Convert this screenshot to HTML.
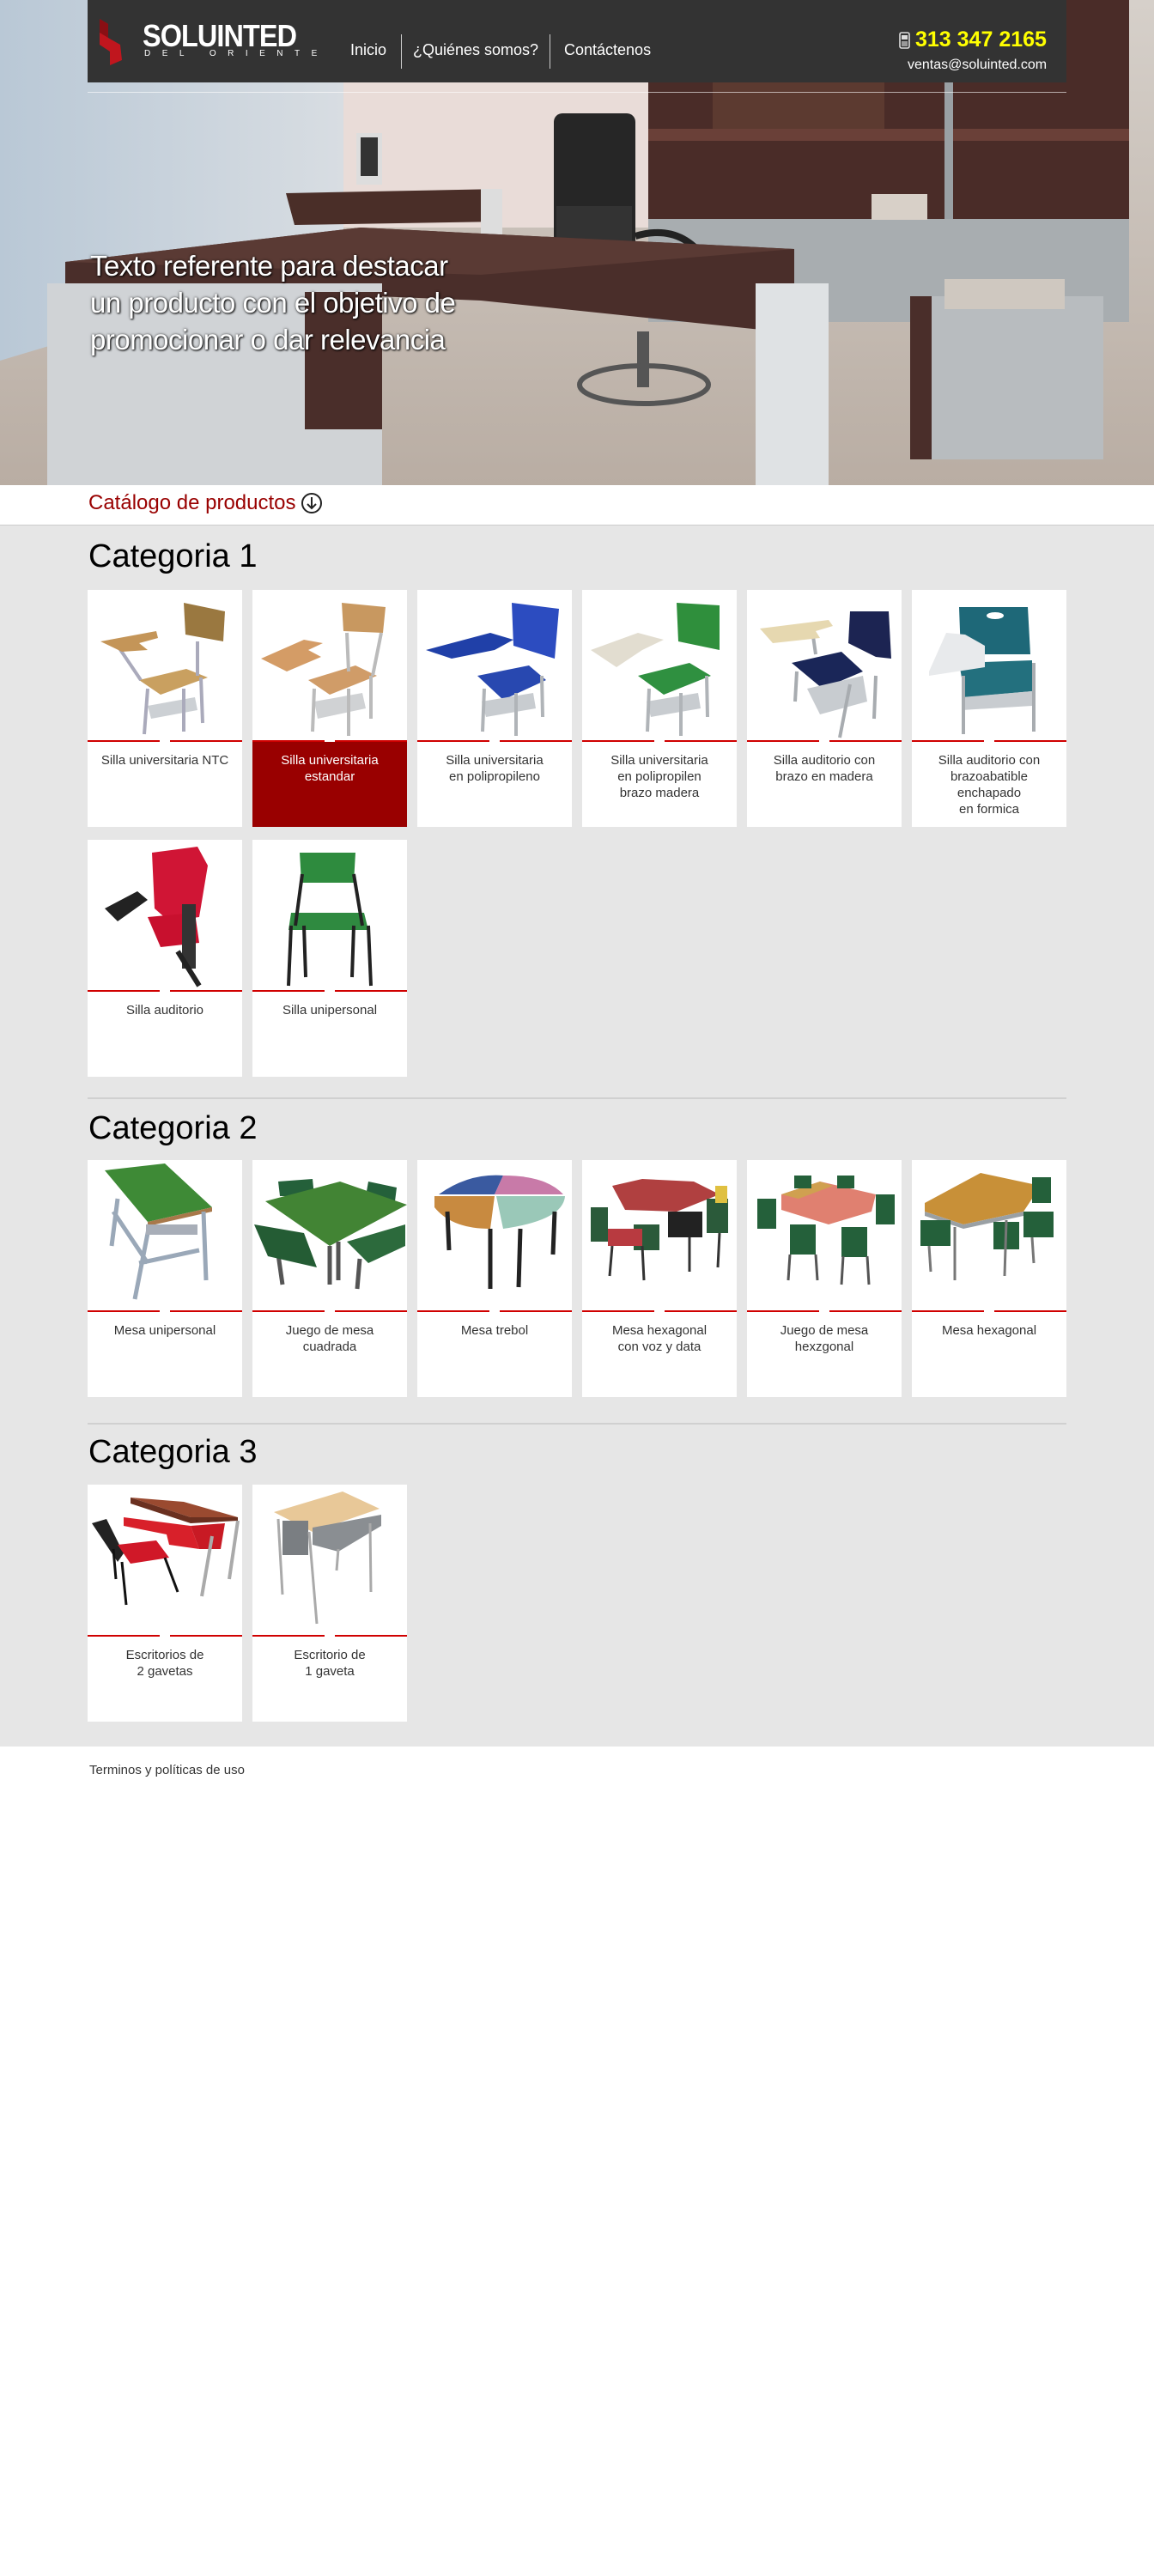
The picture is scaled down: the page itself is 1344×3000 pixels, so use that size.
<!DOCTYPE html>
<html><head><meta charset="utf-8">
<style>
*{margin:0;padding:0;box-sizing:border-box}
body{width:1344px;height:3000px;background:#fff;font-family:"Liberation Sans",Arial,sans-serif;position:relative;overflow:hidden}
.abs{position:absolute}
#hero{left:0;top:0;width:1344px;height:565px;overflow:hidden}
#bar{left:102px;top:0;width:1140px;height:96px;background:#333}
.nav{color:#fff;font-size:18px;top:48px}
.sep{width:1px;height:40px;background:#ccc;top:40px}
.herotxt{left:105px;top:288px;color:#fff;font-size:33px;line-height:43px;text-shadow:1px 1px 2px #000,0 0 3px rgba(0,0,0,.6);letter-spacing:-0.5px}
#cat{left:0;top:565px;width:1344px;height:47px;border-bottom:1px solid #ccc;background:#fff}
#gray{left:0;top:612px;width:1344px;height:1422px;background:#e6e6e6}
h2{position:absolute;left:103px;font-weight:normal;font-size:38px;color:#000;line-height:46px}
.div{position:absolute;left:102px;width:1140px;height:2px;background:#d0d0d0}
.card{position:absolute;width:180px;height:276px;background:#fff}
.card svg{position:absolute;left:0;top:0}
.rl{position:absolute;top:175px;height:2px;background:#d00000;width:84px}
.lab{position:absolute;left:0;top:177px;width:180px;height:99px;text-align:center;font-size:15px;line-height:19px;color:#333;padding-top:12px}
.red .lab{background:#990000;color:#fff}
</style></head><body>

<div id="hero" class="abs">
<svg width="1344" height="565" viewBox="0 0 1344 565">
<defs>
<linearGradient id="wall" x1="0" x2="1"><stop offset="0" stop-color="#b9c8d6"/><stop offset="1" stop-color="#d8dde2"/></linearGradient>
<linearGradient id="floor" x1="0" y1="0" x2="0" y2="1"><stop offset="0" stop-color="#d6d0ca"/><stop offset="1" stop-color="#b9ada3"/></linearGradient>
</defs>
<rect width="1344" height="565" fill="url(#floor)"/>
<polygon points="0,420 400,300 400,0 0,0" fill="url(#wall)"/>
<rect x="400" y="0" width="355" height="265" fill="#e9dcd8"/>
<rect x="755" y="0" width="560" height="255" fill="#4a2c28"/>
<rect x="755" y="150" width="560" height="14" fill="#6a4038"/>
<rect x="830" y="0" width="200" height="150" fill="#5c3a30"/>
<rect x="1100" y="0" width="10" height="320" fill="#9aa0a4"/>
<rect x="755" y="255" width="560" height="120" fill="#a8adb0"/>
<rect x="1015" y="226" width="65" height="30" fill="#d8d0c8"/>
<rect x="645" y="132" width="95" height="160" rx="10" fill="#262626"/>
<rect x="648" y="240" width="88" height="55" fill="#333"/>
<path d="M740 275 Q790 260 820 300" fill="none" stroke="#222" stroke-width="8"/>
<rect x="742" y="386" width="14" height="65" fill="#555"/>
<ellipse cx="750" cy="448" rx="75" ry="22" fill="none" stroke="#555" stroke-width="6"/>
<rect x="415" y="155" width="30" height="60" fill="#ddd"/>
<rect x="420" y="160" width="20" height="45" fill="#333"/>
<polygon points="333,225 585,220 585,258 343,262" fill="#4a2e28"/>
<rect x="560" y="220" width="25" height="60" fill="#ddd"/>
<polygon points="76,305 420,265 925,290 925,388 560,350 76,330" fill="#4a2e2a"/>
<polygon points="76,305 420,265 925,290 560,320" fill="#5a3a34"/>
<rect x="55" y="330" width="390" height="235" fill="#d0d3d6"/>
<rect x="355" y="340" width="90" height="160" fill="#4a2e2a"/>
<rect x="880" y="330" width="85" height="235" fill="#dfe2e4"/>
<rect x="1060" y="345" width="225" height="190" fill="#b8bcbf"/>
<rect x="1060" y="345" width="25" height="190" fill="#4a2e2a"/>
<rect x="1100" y="325" width="140" height="35" fill="#cfc8c0"/>
</svg>
</div>

<div id="bar" class="abs"></div>
<div class="abs" style="left:102px;top:107px;width:1140px;height:1px;background:rgba(255,255,255,.6)"></div>
<svg class="abs" style="left:112px;top:22px" width="34" height="54" viewBox="0 0 34 54"><polygon points="4,0 14,6 14,22 28,30 30,48 16,54 16,38 4,30" fill="#c0161e"/><polygon points="4,0 14,6 14,22 4,16" fill="#8a0f14"/></svg>
<div class="abs" style="left:166px;top:22px;color:#fff;font-size:36px;font-weight:bold;letter-spacing:-1px;line-height:40px;transform:scaleX(0.9);transform-origin:left">SOLUINTED</div>
<div class="abs" style="left:168px;top:57px;color:#fff;font-size:10px;letter-spacing:13.5px;line-height:12px">DEL ORIENTE</div>
<div class="abs nav" style="left:408px;top:48px">Inicio</div>
<div class="abs sep" style="left:467px"></div>
<div class="abs nav" style="left:481px;top:48px">¿Quiénes somos?</div>
<div class="abs sep" style="left:640px"></div>
<div class="abs nav" style="left:657px;top:48px">Contáctenos</div>
<svg class="abs" style="left:1047px;top:37px" width="13" height="20" viewBox="0 0 13 20"><rect x="1" y="1" width="11" height="18" rx="2" fill="none" stroke="#ddd" stroke-width="1.6"/><rect x="3" y="4" width="7" height="5" fill="#ddd"/><rect x="3" y="11" width="7" height="6" fill="#999"/></svg>
<div class="abs" style="left:1066px;top:31px;color:#ffff00;font-size:25px;font-weight:bold;line-height:30px">313 347 2165</div>
<div class="abs" style="left:1057px;top:66px;color:#fff;font-size:16px;line-height:20px">ventas@soluinted.com</div>

<div class="abs herotxt">Texto referente para destacar<br>un producto con el objetivo de<br>promocionar o dar relevancia</div>

<div id="cat" class="abs"></div>
<div class="abs" style="left:103px;top:571px;color:#990000;font-size:24px;line-height:30px">Catálogo de productos</div>
<svg class="abs" style="left:350px;top:573px" width="26" height="26" viewBox="0 0 26 26"><circle cx="13" cy="13" r="11" fill="none" stroke="#222" stroke-width="2"/><path d="M13 6v13M8 14l5 5 5-5" fill="none" stroke="#222" stroke-width="2"/></svg>

<div id="gray" class="abs"></div>

<h2 style="top:625px">Categoria 1</h2>
<div class="div" style="top:1278px"></div>
<h2 style="top:1291px">Categoria 2</h2>
<div class="div" style="top:1657px"></div>
<h2 style="top:1668px">Categoria 3</h2>

<!-- Row 1 -->
<div class="card" style="left:102px;top:687px">
<svg width="180" height="175"><polygon points="60,105 115,92 140,102 85,122" fill="#c9a060"/><polygon points="70,135 125,125 128,140 74,150" fill="#ccd0d4"/><g stroke="#aab" stroke-width="4"><line x1="70" y1="115" x2="66" y2="168"/><line x1="132" y1="102" x2="134" y2="155"/><line x1="112" y1="115" x2="112" y2="165"/><line x1="128" y1="60" x2="128" y2="100"/><line x1="35" y1="65" x2="62" y2="105"/></g><polygon points="112,15 160,25 158,60 114,52" fill="#9a7840"/><polygon points="15,60 80,48 82,56 60,62 70,70 40,72" fill="#c49558"/></svg>
<div class="rl" style="left:0"></div><div class="rl" style="left:96px"></div><div class="lab">Silla universitaria NTC</div></div>

<div class="card red" style="left:294px;top:687px">
<svg width="180" height="175"><polygon points="65,105 120,88 145,100 90,122" fill="#d09c68"/><polygon points="72,130 128,120 132,138 76,150" fill="#d0d2d4"/><g stroke="#bbb" stroke-width="4"><line x1="72" y1="115" x2="70" y2="165"/><line x1="138" y1="100" x2="138" y2="150"/><line x1="112" y1="115" x2="112" y2="170"/><line x1="150" y1="50" x2="140" y2="100"/><line x1="110" y1="50" x2="112" y2="95"/></g><polygon points="104,15 155,20 152,50 106,48" fill="#c89860"/><polygon points="10,80 60,58 82,62 65,70 80,78 40,95" fill="#d49c66"/></svg>
<div class="rl" style="left:0"></div><div class="rl" style="left:96px"></div><div class="lab">Silla universitaria<br>estandar</div></div>

<div class="card" style="left:486px;top:687px">
<svg width="180" height="175"><polygon points="70,100 130,88 150,105 100,128" fill="#2848b0"/><polygon points="75,130 135,120 138,138 80,148" fill="#c8ccd0"/><g stroke="#b0b4b8" stroke-width="4"><line x1="78" y1="115" x2="76" y2="165"/><line x1="145" y1="100" x2="146" y2="148"/><line x1="115" y1="120" x2="115" y2="170"/></g><polygon points="110,15 165,22 160,80 112,65" fill="#2c4cc0"/><polygon points="10,70 85,50 112,58 90,70 40,80" fill="#2040a8"/></svg>
<div class="rl" style="left:0"></div><div class="rl" style="left:96px"></div><div class="lab">Silla universitaria<br>en polipropileno</div></div>

<div class="card" style="left:678px;top:687px">
<svg width="180" height="175"><polygon points="65,100 125,85 150,100 95,122" fill="#2f9040"/><polygon points="75,130 135,120 138,138 80,148" fill="#c8ccd0"/><g stroke="#b0b4b8" stroke-width="4"><line x1="78" y1="115" x2="76" y2="165"/><line x1="145" y1="100" x2="146" y2="148"/><line x1="115" y1="120" x2="115" y2="170"/></g><polygon points="110,15 160,18 160,70 112,60" fill="#2f8f3c"/><polygon points="10,70 65,50 95,58 70,70 40,90" fill="#e2ddd0"/></svg>
<div class="rl" style="left:0"></div><div class="rl" style="left:96px"></div><div class="lab">Silla universitaria<br>en polipropilen<br>brazo madera</div></div>

<div class="card" style="left:870px;top:687px">
<svg width="180" height="175"><polygon points="52,85 110,72 135,95 88,115" fill="#1a2658"/><polygon points="70,115 135,100 140,130 85,145" fill="#c8ccd0"/><g stroke="#a8acb0" stroke-width="4"><line x1="58" y1="95" x2="56" y2="130"/><line x1="150" y1="100" x2="148" y2="150"/><line x1="120" y1="110" x2="108" y2="172"/><line x1="75" y1="40" x2="80" y2="75"/></g><polygon points="120,25 165,25 168,80 150,78 118,62" fill="#1c2452"/><polygon points="15,45 95,35 100,42 80,48 85,56 30,62" fill="#e6d8b0"/></svg>
<div class="rl" style="left:0"></div><div class="rl" style="left:96px"></div><div class="lab">Silla auditorio con<br>brazo en madera</div></div>

<div class="card" style="left:1062px;top:687px">
<svg width="180" height="175"><polygon points="55,20 135,20 138,75 57,75" fill="#1e6878"/><ellipse cx="97" cy="30" rx="10" ry="4" fill="#fff"/><polygon points="55,85 140,82 140,118 62,125" fill="#23707e"/><polygon points="58,125 140,118 140,135 58,140" fill="#c8ccd0"/><g stroke="#a8acb0" stroke-width="4"><line x1="60" y1="100" x2="60" y2="168"/><line x1="142" y1="85" x2="142" y2="165"/></g><polygon points="20,95 40,50 62,52 85,65 85,90 20,100" fill="#e8eaec"/></svg>
<div class="rl" style="left:0"></div><div class="rl" style="left:96px"></div><div class="lab">Silla auditorio con<br>brazoabatible<br>enchapado<br>en formica</div></div>

<!-- Row 1b -->
<div class="card" style="left:102px;top:978px">
<svg width="180" height="175"><polygon points="75,15 128,8 140,30 130,90 95,95 78,80" fill="#d01535"/><polygon points="70,90 125,85 130,120 85,125" fill="#c8102e"/><polygon points="20,80 58,60 70,70 35,95" fill="#222"/><rect x="110" y="75" width="16" height="75" fill="#333"/><line x1="105" y1="130" x2="130" y2="170" stroke="#222" stroke-width="6"/></svg>
<div class="rl" style="left:0"></div><div class="rl" style="left:96px"></div><div class="lab">Silla auditorio</div></div>

<div class="card" style="left:294px;top:978px">
<svg width="180" height="175"><polygon points="55,15 120,15 118,50 57,50" fill="#2e8b3e"/><polygon points="45,85 130,85 135,105 42,105" fill="#2f8a40"/><g stroke="#222" stroke-width="4" fill="none"><line x1="45" y1="100" x2="42" y2="170"/><line x1="135" y1="100" x2="138" y2="170"/><line x1="58" y1="40" x2="50" y2="100"/><line x1="118" y1="40" x2="128" y2="100"/><line x1="60" y1="100" x2="62" y2="160"/><line x1="118" y1="100" x2="116" y2="160"/></g></svg>
<div class="rl" style="left:0"></div><div class="rl" style="left:96px"></div><div class="lab">Silla unipersonal</div></div>

<!-- Cat 2 -->
<div class="card" style="left:102px;top:1351px">
<svg width="180" height="175"><polygon points="20,12 90,4 145,55 70,72" fill="#3e8a36"/><polygon points="70,72 145,55 145,60 70,77" fill="#a8784a"/><g stroke="#9aa8b8" stroke-width="5"><line x1="35" y1="45" x2="28" y2="100"/><line x1="72" y1="75" x2="55" y2="162"/><line x1="135" y1="60" x2="138" y2="140"/><line x1="30" y1="60" x2="70" y2="120"/><line x1="60" y1="120" x2="130" y2="105"/></g><rect x="68" y="75" width="60" height="12" fill="#a8aeb8"/></svg>
<div class="rl" style="left:0"></div><div class="rl" style="left:96px"></div><div class="lab">Mesa unipersonal</div></div>

<div class="card" style="left:294px;top:1351px">
<svg width="180" height="175"><polygon points="30,25 70,22 72,42 32,42" fill="#24603a"/><polygon points="135,25 168,32 166,48 132,42" fill="#24603a"/><polygon points="15,48 102,25 180,52 90,100" fill="#428434"/><g stroke="#555" stroke-width="5"><line x1="90" y1="100" x2="90" y2="145"/><line x1="100" y1="95" x2="100" y2="140"/><line x1="30" y1="110" x2="35" y2="145"/><line x1="125" y1="115" x2="122" y2="150"/></g><polygon points="2,75 60,85 75,125 18,112" fill="#245c34"/><polygon points="110,95 178,75 178,100 135,120" fill="#2c6a3c"/></svg>
<div class="rl" style="left:0"></div><div class="rl" style="left:96px"></div><div class="lab">Juego de mesa<br>cuadrada</div></div>

<div class="card" style="left:486px;top:1351px">
<svg width="180" height="175"><path d="M25,40 Q60,15 100,18 L90,40 Z" fill="#3a5aa0"/><path d="M100,18 Q150,18 170,40 L90,40 Z" fill="#c87aa8"/><path d="M20,42 L90,42 L85,80 Q40,80 20,55 Z" fill="#c88a40"/><path d="M92,42 L172,42 Q170,70 100,80 Z" fill="#9ac8b8"/><g stroke="#222" stroke-width="5"><line x1="35" y1="60" x2="37" y2="105"/><line x1="85" y1="80" x2="85" y2="150"/><line x1="120" y1="80" x2="118" y2="148"/><line x1="160" y1="60" x2="158" y2="110"/></g></svg>
<div class="rl" style="left:0"></div><div class="rl" style="left:96px"></div><div class="lab">Mesa trebol</div></div>

<div class="card" style="left:678px;top:1351px">
<svg width="180" height="175"><polygon points="35,30 70,22 130,25 160,40 110,60 50,58" fill="#b04040"/><g fill="#2b5a3a"><rect x="10" y="55" width="20" height="40"/><rect x="145" y="45" width="25" height="40"/><rect x="60" y="75" width="30" height="30"/></g><rect x="30" y="80" width="40" height="20" fill="#b83a40"/><rect x="100" y="60" width="40" height="30" fill="#222"/><g stroke="#333" stroke-width="3"><line x1="35" y1="100" x2="32" y2="135"/><line x1="70" y1="100" x2="72" y2="140"/><line x1="125" y1="90" x2="125" y2="130"/><line x1="160" y1="85" x2="158" y2="125"/></g><rect x="155" y="30" width="14" height="20" fill="#e0c040"/></svg>
<div class="rl" style="left:0"></div><div class="rl" style="left:96px"></div><div class="lab">Mesa hexagonal<br>con voz y data</div></div>

<div class="card" style="left:870px;top:1351px">
<svg width="180" height="175"><polygon points="40,40 85,25 150,40 145,60 95,75 40,58" fill="#e08070"/><polygon points="40,40 85,25 100,30 60,45" fill="#d0a050"/><g fill="#24603a"><rect x="12" y="45" width="22" height="35"/><rect x="150" y="40" width="22" height="35"/><rect x="50" y="75" width="30" height="35"/><rect x="110" y="78" width="30" height="35"/><rect x="55" y="18" width="20" height="15"/><rect x="105" y="18" width="20" height="15"/></g><g stroke="#555" stroke-width="3"><line x1="50" y1="110" x2="48" y2="140"/><line x1="80" y1="110" x2="82" y2="140"/><line x1="112" y1="112" x2="110" y2="145"/><line x1="140" y1="112" x2="142" y2="145"/></g></svg>
<div class="rl" style="left:0"></div><div class="rl" style="left:96px"></div><div class="lab">Juego de mesa<br>hexzgonal</div></div>

<div class="card" style="left:1062px;top:1351px">
<svg width="180" height="175"><polygon points="15,50 80,15 150,30 130,60 60,75 15,60" fill="#c89038"/><polygon points="15,60 60,75 130,60 130,65 60,80 15,65" fill="#9aa0a4"/><g fill="#24603a"><rect x="10" y="70" width="35" height="30"/><rect x="140" y="20" width="22" height="30"/><rect x="95" y="72" width="30" height="32"/><rect x="130" y="60" width="35" height="30"/></g><g stroke="#777" stroke-width="3"><line x1="50" y1="78" x2="50" y2="140"/><line x1="110" y1="70" x2="108" y2="135"/><line x1="20" y1="100" x2="22" y2="130"/><line x1="140" y1="90" x2="142" y2="120"/></g></svg>
<div class="rl" style="left:0"></div><div class="rl" style="left:96px"></div><div class="lab">Mesa hexagonal</div></div>

<!-- Cat 3 -->
<div class="card" style="left:102px;top:1729px">
<svg width="180" height="175"><polygon points="50,15 112,20 175,38 120,38" fill="#9a4a30"/><polygon points="50,15 120,38 175,38 175,42 120,45 50,22" fill="#6a3020"/><polygon points="42,38 120,48 130,75 95,70 92,58 42,48" fill="#d8202a"/><polygon points="120,48 160,45 155,75 130,75" fill="#c81a24"/><g stroke="#aaa" stroke-width="4"><line x1="145" y1="60" x2="133" y2="130"/><line x1="175" y1="42" x2="165" y2="110"/></g><polygon points="5,45 22,40 42,80 35,90" fill="#222"/><polygon points="35,70 80,65 95,85 50,92" fill="#d01828"/><g stroke="#111" stroke-width="3"><line x1="40" y1="90" x2="45" y2="140"/><line x1="90" y1="85" x2="105" y2="125"/><line x1="30" y1="75" x2="33" y2="110"/></g></svg>
<div class="rl" style="left:0"></div><div class="rl" style="left:96px"></div><div class="lab">Escritorios de<br>2 gavetas</div></div>

<div class="card" style="left:294px;top:1729px">
<svg width="180" height="175"><polygon points="25,32 105,8 148,28 70,55" fill="#e8c898"/><polygon points="70,50 150,35 150,48 100,78 70,70" fill="#8a8e92"/><rect x="35" y="42" width="30" height="40" fill="#7a7e82"/><g stroke="#aaa" stroke-width="3"><line x1="30" y1="40" x2="35" y2="128"/><line x1="66" y1="55" x2="75" y2="162"/><line x1="137" y1="45" x2="138" y2="125"/><line x1="100" y1="75" x2="98" y2="100"/></g></svg>
<div class="rl" style="left:0"></div><div class="rl" style="left:96px"></div><div class="lab">Escritorio de<br>1 gaveta</div></div>

<div class="abs" style="left:104px;top:2053px;font-size:15px;color:#333;line-height:18px">Terminos y políticas de uso</div>
</body></html>
